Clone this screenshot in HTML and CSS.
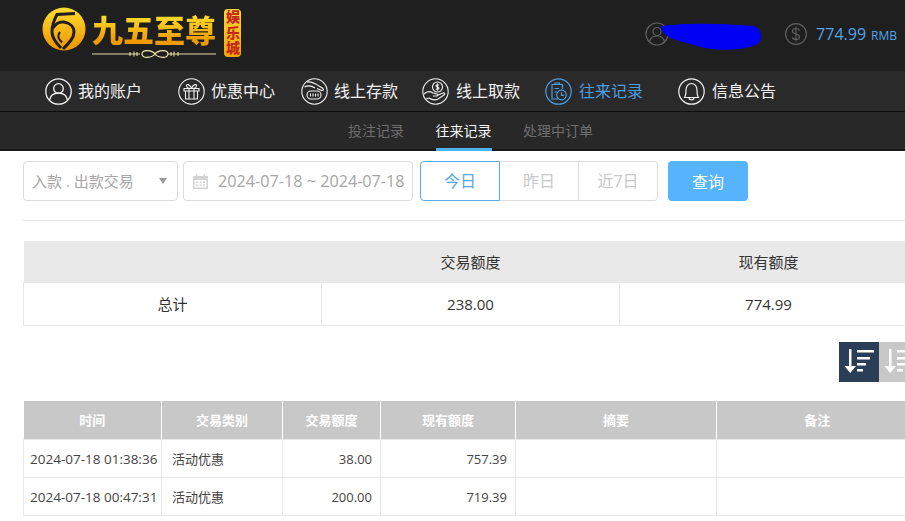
FILE: index.html
```html
<!DOCTYPE html>
<html lang="zh-CN">
  <head>
    <meta charset="UTF-8">
    <title>往来记录</title>
    <link rel="stylesheet" href="styles.css">
  </head>
  <body>
    <header class="topbar">
      <div class="logo">
        <svg class="logo-mark" width="44" height="44" viewBox="0 0 44 44">
          <defs>
            <linearGradient id="gold" x1="0" y1="0" x2="0" y2="1">
              <stop offset="0" stop-color="#ffdc2e"/>
              <stop offset="1" stop-color="#ee9400"/>
            </linearGradient>
          </defs>
          <circle cx="22" cy="22" r="21.500" fill="url(#gold)"/>
          <path d="M33 6.500 15 7.500C12 13 10 19 10 25 10 31 14 36 19 41" fill="none" stroke="#1f1f1f" stroke-width="3"/>
          <path d="M11 21C14 16 18 14.500 22 15 28 16 32 20 32 25 32 31 27 36 21 42" fill="none" stroke="#1f1f1f" stroke-width="3"/>
          <path d="M18 25C15.500 28 16 32 20 35.500" fill="none" stroke="#1f1f1f" stroke-width="2"/>
        </svg>
        <div class="logo-words">
          <div class="logo-name">九五至尊</div>
          <svg class="logo-flourish" width="124" height="10" viewBox="0 0 124 10">
            <path d="M0 5H48M76 5H124" stroke="#e6dca4" stroke-width="1"/>
            <path d="M50 5C50 0 60 1 63 5S76 10 76 5 66 1 63 5 50 10 50 5Z" fill="none" stroke="#f2e8b0" stroke-width="1.200"/>
            <path d="M38 3V7M42 2.500V7.500M45 3V7M79 3V7M82 2.500V7.500M86 3V7" stroke="#f2e8b0" stroke-width="1"/>
          </svg>
        </div>
        <div class="logo-badge">娱乐城</div>
      </div>
      <div class="account">
        <div class="account-user">
          <svg class="account-icon" width="24" height="24" viewBox="0 0 24 24" fill="none" stroke="#5f5f5f" stroke-width="1.200">
            <circle cx="12" cy="12" r="11"/>
            <circle cx="12" cy="9.500" r="4"/>
            <path d="M4.500 19.500c1-4 4-5.500 7.500-5.500s6.500 1.500 7.500 5.500"/>
          </svg>
          <svg class="scribble" width="101" height="27" viewBox="0 0 101 27">
            <path d="M2 3C20 0 60 0 93 3c6 1 8 6 8 12 0 6-8 9-22 11-18 2-33 0-46-4C20 18 8 16 3 9 1 7 1 4 2 3Z" fill="#0000f5"/>
          </svg>
        </div>
        <div class="account-balance">
          <svg width="22" height="22" viewBox="0 0 22 22" fill="none" stroke="#5f5f5f" stroke-width="1.200">
            <circle cx="11" cy="11" r="10.400"/>
            <path d="M14.500 7.500C14 6 12.500 5.500 11 5.500 9 5.500 7.500 6.500 7.500 8.200c0 3.800 7 1.800 7 5.500 0 1.800-1.500 2.800-3.500 2.800-1.700 0-3.200-.8-3.700-2.200M11 3.500V18.500"/>
          </svg>
          <span class="amount">774.99</span>
          <span class="currency">RMB</span>
        </div>
      </div>
    </header>

    <nav class="mainnav">
      <a class="mainnav-item">
        <svg width="27" height="27" viewBox="0 0 27 27" fill="none" stroke="currentColor" stroke-width="1.300">
          <circle cx="13.500" cy="13.500" r="12.700"/>
          <circle cx="13.500" cy="10.500" r="4.800"/>
          <path d="M4.500 22c1-5 5-7 9-7s8 2 9 7"/>
        </svg>
        <span>我的账户</span>
      </a>
      <a class="mainnav-item">
        <svg width="27" height="27" viewBox="0 0 27 27" fill="none" stroke="currentColor" stroke-width="1.100">
          <circle cx="13.500" cy="13.500" r="12.700"/>
          <path d="M6 10.500H21V13H6ZM7.500 13V21H19.500V13M11 10.500V21M16 10.500V21M13.500 10.500C12 6 8 5.500 8.500 8c.3 1.500 3 2.500 5 2.500 2 0 4.700-1 5-2.500.5-2.500-3.500-2-5 2.500"/>
        </svg>
        <span>优惠中心</span>
      </a>
      <a class="mainnav-item">
        <svg width="27" height="27" viewBox="0 0 27 27" fill="none" stroke="currentColor" stroke-width="1.100">
          <circle cx="13.500" cy="13.500" r="12.700"/>
          <path d="M6 4C11 3 15 6 18 8l4 2.500c1 1.500-.5 2.500-2 1.800L16 10.500M3.500 9C7 7 11 8 14 10"/>
          <rect x="6" y="13" width="14" height="8" rx="4"/>
          <path d="M9.500 15.500V18.500M12 15.500V18.500M14.500 15.500V18.500M17 15.500V18.500"/>
        </svg>
        <span>线上存款</span>
      </a>
      <a class="mainnav-item">
        <svg width="27" height="27" viewBox="0 0 27 27" fill="none" stroke="currentColor" stroke-width="1.100">
          <circle cx="13.500" cy="13.500" r="12.700"/>
          <circle cx="15.500" cy="9" r="5"/>
          <path d="M17 7.300C16.500 6.500 14 6.500 14 8c0 1.500 3 .8 3 2.300 0 1.300-2.500 1.300-3 .4M15.500 5.500V12.500"/>
          <path d="M2 16c3-3 6-3 9-1l4 1c1.500.5 1 2-.5 2H11M15 17.500l6-2.500c1.500-.5 2.500 1 1 2l-6 4c-3 1.500-6 1-9-1l-3 1"/>
        </svg>
        <span>线上取款</span>
      </a>
      <a class="mainnav-item active">
        <svg width="27" height="27" viewBox="0 0 27 27" fill="none" stroke="currentColor" stroke-width="1.200">
          <circle cx="13.500" cy="13.500" r="12.700"/>
          <path d="M13 21H7V6.500H17.500V11M10 6.500V5H14.500V6.500M9.500 10.500H14M9.500 14H12"/>
          <circle cx="16.500" cy="17" r="4.800"/>
          <path d="M16.500 14.500V17.300H19"/>
        </svg>
        <span>往来记录</span>
      </a>
      <a class="mainnav-item">
        <svg width="27" height="27" viewBox="0 0 27 27" fill="none" stroke="currentColor" stroke-width="1.200">
          <circle cx="13.500" cy="13.500" r="12.700"/>
          <path d="M6.500 19.500C8 17.500 8 15 8 12c0-3.500 2.200-6.500 5.500-6.500S19 8.500 19 12c0 3 0 5.500 1.500 7.500ZM11 19.500c0 3 5 3 5 0"/>
        </svg>
        <span>信息公告</span>
      </a>
    </nav>

    <div class="subnav">
      <a class="subnav-item">投注记录</a>
      <a class="subnav-item active">往来记录</a>
      <a class="subnav-item">处理中订单</a>
    </div>

    <main class="content">
      <div class="filters">
        <div class="field select">
          <span>入款 . 出款交易</span>
          <i class="caret"></i>
        </div>
        <div class="field dates">
          <svg width="17" height="17" viewBox="0 0 17 17" fill="#d3d3d3">
            <path d="M1 3H4V1H5.500V3H11.500V1H13V3H16V16H1ZM2.500 7V14.500H14.500V7Z"/>
            <path d="M4 8.500H6V10H4ZM7.500 8.500H9.500V10H7.500ZM11 8.500H13V10H11ZM4 11.500H6V13H4ZM7.500 11.500H9.500V13H7.500ZM11 11.500H13V13H11Z"/>
          </svg>
          <span>2024-07-18 ~ 2024-07-18</span>
        </div>
        <div class="ranges">
          <a class="range active">今日</a>
          <a class="range">昨日</a>
          <a class="range">近7日</a>
        </div>
        <button class="search">查询</button>
      </div>

      <table class="summary">
        <tr>
          <th></th>
          <th>交易额度</th>
          <th>现有额度</th>
        </tr>
        <tr>
          <td>总计</td>
          <td>238.00</td>
          <td>774.99</td>
        </tr>
      </table>

      <div class="sorters">
        <a class="sorter active">
          <svg width="32" height="28" viewBox="0 0 32 28" fill="#fff">
            <path d="M6 1H8.500V18H13L7.200 25 1.500 18H6ZM14 2H31V4.500H14ZM14 9H27V11.500H14ZM14 15H23V17.500H14ZM14 21H20V23.500H14Z"/>
          </svg>
        </a>
        <a class="sorter">
          <svg width="32" height="28" viewBox="0 0 32 28" fill="#fff">
            <path d="M6 1H8.500V18H13L7.200 25 1.500 18H6ZM14 2H31V4.500H14ZM14 9H27V11.500H14ZM14 15H23V17.500H14ZM14 21H20V23.500H14Z"/>
          </svg>
        </a>
      </div>

      <table class="records">
        <colgroup>
          <col class="col-time">
          <col class="col-type">
          <col class="col-amount">
          <col class="col-balance">
          <col class="col-note">
          <col class="col-note">
        </colgroup>
        <tr>
          <th>时间</th>
          <th>交易类别</th>
          <th>交易额度</th>
          <th>现有额度</th>
          <th>摘要</th>
          <th>备注</th>
        </tr>
        <tr>
          <td class="time">2024-07-18 01:38:36</td>
          <td class="type">活动优惠</td>
          <td class="num">38.00</td>
          <td class="num">757.39</td>
          <td></td>
          <td></td>
        </tr>
        <tr>
          <td class="time">2024-07-18 00:47:31</td>
          <td class="type">活动优惠</td>
          <td class="num">200.00</td>
          <td class="num">719.39</td>
          <td></td>
          <td></td>
        </tr>
      </table>
    </main>
  </body>
</html>
```

FILE: styles.css
```css
* {
  box-sizing: border-box;
  margin: 0;
  padding: 0;
}

html, body {
  height: 100%;
  overflow: hidden;
}

body {
  background: #fff;
  color: #333;
  font-family: "Open Sans", "Noto Sans CJK SC", sans-serif;
  font-size: 14px;
}

/* top bar */
.topbar {
  align-items: flex-start;
  background: #1f1f1f;
  display: flex;
  height: 71px;
  justify-content: space-between;
  padding: 7px 7px 0 42px;
}

.logo {
  display: flex;
}

.logo-words {
  margin-left: 6px;
}

.logo-name {
  background: linear-gradient(#ffd92a 25%, #ef9a00 85%);
  -webkit-background-clip: text;
  background-clip: text;
  color: transparent;
  font-family: "Noto Sans CJK SC", sans-serif;
  font-size: 31px;
  font-weight: 900;
  height: 40px;
  line-height: 44px;
  white-space: nowrap;
}

.logo-flourish {
  display: block;
  margin-top: 2px;
}

.logo-badge {
  background: linear-gradient(#ffd83a, #f0a400);
  border-radius: 4px;
  color: #c4281a;
  font-family: "Noto Sans CJK SC", sans-serif;
  font-size: 14px;
  font-weight: 900;
  height: 48px;
  letter-spacing: 1.500px;
  line-height: 17px;
  margin: 2px 0 0 8px;
  padding-top: 1px;
  width: 17px;
  writing-mode: vertical-rl;
}

.account {
  align-items: center;
  display: flex;
  margin-top: 15px;
}

.account-user {
  height: 24px;
  position: relative;
  width: 140px;
}

.account-icon {
  display: block;
}

.scribble {
  left: 15px;
  position: absolute;
  top: 1px;
}

.account-balance {
  align-items: center;
  display: flex;
}

.amount {
  color: #4fa5ea;
  font-size: 16px;
  margin-left: 9px;
}

.currency {
  color: #4fa5ea;
  font-size: 12px;
  margin: 2px 0 0 5px;
  padding-right: 1px;
}

/* main nav */
.mainnav {
  background: #2a2a2a;
  border-bottom: 1px solid #0e0e0e;
  display: grid;
  grid-template-columns: 133px 123px 121px 123px 133px auto;
  height: 41px;
  padding-left: 45px;
}

.mainnav-item {
  align-items: center;
  color: #f2f2f2;
  display: flex;
  font-size: 16px;
  gap: 6px;
  height: 40px;
}

.mainnav-item span {
  margin-bottom: 2px;
}

.mainnav-item:nth-child(n+4) {
  gap: 7px;
}

.mainnav-item.active {
  color: #4a9de2;
}

/* sub nav */
.subnav {
  background: #282828;
  border-bottom: 2px solid #1a1a1a;
  display: flex;
  gap: 31.500px;
  height: 39px;
  padding-left: 348px;
}

.subnav-item {
  color: #6e6e6e;
  height: 39px;
  line-height: 38px;
  white-space: nowrap;
}

.subnav-item.active {
  border-bottom: 3px solid #4db4ee;
  color: #f4f4f4;
}

/* filter row */
.content {
  margin-left: 23px;
  padding-top: 10px;
  width: 896px;
}

.filters {
  border-bottom: 1px solid #e6e6e6;
  display: flex;
  padding-bottom: 19px;
}

.field {
  align-items: center;
  border: 1px solid #dcdcdc;
  border-radius: 4px;
  color: #a6a6a6;
  display: flex;
  font-size: 15px;
  height: 40px;
}

.select {
  justify-content: space-between;
  padding: 0 10px 0 8px;
  width: 155px;
}

.select span {
  margin-bottom: 2px;
}

.caret {
  border-left: 4px solid transparent;
  border-right: 4px solid transparent;
  border-top: 6px solid #9a9a9a;
}

.dates {
  gap: 9px;
  margin-left: 5px;
  padding-left: 8px;
  white-space: nowrap;
  width: 230px;
}

.dates span {
  font-size: 16.200px;
}

.ranges {
  display: flex;
  margin-left: 7px;
}

.range {
  border: 1px solid #dcdcdc;
  border-left-width: 0;
  color: #c8c8c8;
  font-size: 16px;
  height: 40px;
  line-height: 39px;
  text-align: center;
  width: 79px;
}

.range:last-child {
  border-radius: 0 4px 4px 0;
}

.range.active {
  border: 1px solid #58ade8;
  border-radius: 4px 0 0 4px;
  color: #58a8e6;
  width: 80px;
}

.search {
  background: #55b4fb;
  border: 0;
  border-radius: 4px;
  color: #fff;
  font-family: inherit;
  font-size: 16px;
  height: 40px;
  margin-left: 10px;
  width: 80px;
}

/* tables */
table {
  border-collapse: collapse;
  table-layout: fixed;
  width: 894px;
}

.summary {
  font-size: 15px;
  margin-top: 20px;
  width: 895px;
}

.summary th {
  background: #e9e9e9;
  font-weight: 400;
  height: 41px;
}

.summary td {
  border: 1px solid #e8e8e8;
  height: 43px;
  text-align: center;
}

.sorters {
  display: flex;
  justify-content: flex-end;
  margin-top: 16px;
}

.sorter {
  align-items: center;
  background: #c8c8c8;
  display: flex;
  height: 40px;
  justify-content: center;
  width: 40px;
}

.sorter.active {
  background: #2b3e57;
}

.records {
  font-size: 13px;
  margin-top: 19px;
}

.col-time { width: 138px; }
.col-type { width: 121px; }
.col-amount { width: 98px; }
.col-balance { width: 135px; }
.col-note { width: 201px; }

.records th {
  background: #c8c8c8;
  border-left: 1px solid #fff;
  color: #fff;
  font-weight: 700;
  height: 39px;
}

.records th:first-child {
  border-left: 0;
}

.records td {
  border: 1px solid #e8e8e8;
  color: #444;
  height: 38px;
  white-space: nowrap;
}

.records .time {
  font-size: 13.500px;
  padding-left: 6px;
}

.records .type {
  padding-left: 10px;
}

.records .num {
  padding-right: 8px;
  text-align: right;
}
```
